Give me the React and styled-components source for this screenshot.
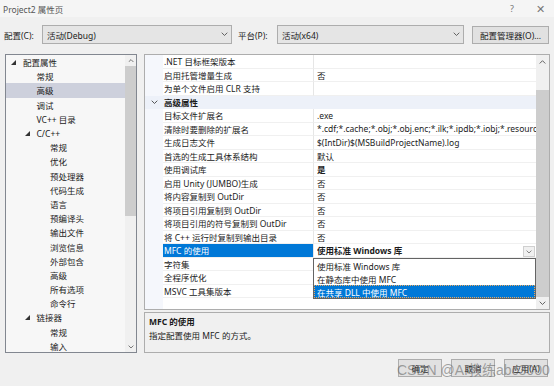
import React from 'react';
import styled, { createGlobalStyle } from 'styled-components';

const Global = createGlobalStyle`
  html, body { margin: 0; padding: 0; background: #f0f0f0; }
  body { font-family: "Noto Sans", "Noto Sans CJK SC", sans-serif; }
`;

const Dialog = styled.div`
  position: relative;
  width: 554px;
  height: 386px;
  overflow: hidden;
  background: #f0f0f0;
  font-family: "Noto Sans", "Noto Sans CJK SC", sans-serif;
  font-size: 8.5px;
  color: #1b1b1b;
  display: flex;
  flex-direction: column;
`;

const TitleBar = styled.div`
  height: 17px;
  display: flex;
  align-items: center;
  padding-left: 3px;
  background: #f5f5f5;
  color: #555;
`;

const TitleText = styled.div`
  flex: 1;
`;

const TitleButton = styled.div`
  width: 28px;
  text-align: center;
  color: #777;
  font-size: ${(p) => p.$size || 9}px;
`;

const ConfigRow = styled.div`
  margin-top: 8px;
  height: 19px;
  display: flex;
  align-items: center;
  padding-left: 4px;
`;

const Label = styled.div`
  width: ${(p) => p.$w}px;
  flex: none;
`;

const Combo = styled.div`
  width: ${(p) => p.$w}px;
  height: 17px;
  flex: none;
  border: 1px solid #adadad;
  background: #e5e5e5;
  display: flex;
  align-items: center;
  padding-left: 4px;
  box-sizing: content-box;
  margin-right: ${(p) => p.$mr || 0}px;
`;

const ComboText = styled.div`
  flex: 1;
`;

const ComboArrow = styled.div`
  width: 14px;
  display: flex;
  align-items: center;
  justify-content: center;
`;

const PushButton = styled.div`
  width: ${(p) => p.$w}px;
  height: ${(p) => p.$h}px;
  flex: none;
  border: 1px solid #adadad;
  background: #e1e1e1;
  display: flex;
  align-items: center;
  justify-content: center;
  box-sizing: border-box;
`;

const Main = styled.div`
  margin-top: 10px;
  height: 299px;
  display: flex;
  padding-left: 5px;
  gap: 7px;
`;

const TreePanel = styled.div`
  width: 132px;
  box-sizing: border-box;
  border: 1px solid #828790;
  background: #f7f7f7;
  display: flex;
`;

const TreeList = styled.div`
  flex: 1;
  overflow: hidden;
`;

const TreeRow = styled.div`
  height: 14.2px;
  display: flex;
  align-items: center;
  padding-left: ${(p) => 4 + p.$level * 13.5}px;
  background: ${(p) => (p.$selected ? '#cdd0dc' : 'transparent')};
  white-space: nowrap;
`;

const Twisty = styled.div`
  width: 13px;
  flex: none;
  display: flex;
  align-items: center;
  padding-left: 1px;
  box-sizing: border-box;
`;

const ScrollBar = styled.div`
  width: ${(p) => p.$w}px;
  flex: none;
  background: #f0f0f0;
  display: flex;
  flex-direction: column;
`;

const ScrollArrow = styled.div`
  height: ${(p) => p.$h}px;
  flex: none;
  display: flex;
  align-items: center;
  justify-content: center;
`;

const ScrollTrack = styled.div`
  flex: 1;
  display: flex;
  flex-direction: column;
  align-items: center;
`;

const ScrollThumb = styled.div`
  width: ${(p) => p.$w}px;
  margin-top: ${(p) => p.$top}px;
  height: ${(p) => p.$h}px;
  background: #cdcdcd;
`;

const RightCol = styled.div`
  width: 406px;
  display: flex;
  flex-direction: column;
  gap: 2px;
`;

const Grid = styled.div`
  height: 256px;
  box-sizing: border-box;
  border: 1px solid #adadad;
  background: #fff;
  display: flex;
`;

const GridBody = styled.div`
  position: relative;
  flex: 1;
  overflow: hidden;
  background: linear-gradient(to right, #f5f7fc 0, #f5f7fc 18px, #fff 18px);
`;

const GridRow = styled.div`
  height: 13.5px;
  display: grid;
  grid-template-columns: 18px 150px 1fr;
  background: ${(p) => (p.$category ? '#edf1f9' : 'transparent')};
`;

const Gutter = styled.div`
  display: flex;
  align-items: center;
  justify-content: center;
`;

const NameCell = styled.div`
  display: flex;
  align-items: center;
  padding-left: 1px;
  white-space: nowrap;
  overflow: hidden;
  box-sizing: border-box;
  font-weight: ${(p) => (p.$bold ? 700 : 400)};
  background: ${(p) => (p.$active ? '#0078d7' : 'transparent')};
  color: ${(p) => (p.$active ? '#fff' : 'inherit')};
  border-bottom: 1px solid ${(p) => (p.$category ? 'transparent' : '#f0f0f0')};
`;

const ValueCell = styled.div`
  display: flex;
  align-items: center;
  padding-left: 3px;
  white-space: nowrap;
  overflow: hidden;
  box-sizing: border-box;
  font-weight: ${(p) => (p.$bold ? 700 : 400)};
  border-left: 1px solid ${(p) => (p.$category ? 'transparent' : '#e6e6e6')};
  border-bottom: 1px solid ${(p) => (p.$category ? 'transparent' : '#f0f0f0')};
`;

const ValueText = styled.div`
  flex: 1;
  overflow: hidden;
`;

const DropButton = styled.div`
  width: 12px;
  height: 11px;
  flex: none;
  margin-right: 1px;
  border: 1px solid #cfcfcf;
  background: #f0f0f0;
  display: flex;
  align-items: center;
  justify-content: center;
  box-sizing: border-box;
  align-self: flex-start;
  margin-top: 2px;
`;

const DropList = styled.div`
  position: absolute;
  left: 168px;
  top: 203px;
  width: 223px;
  height: 41px;
  box-sizing: border-box;
  border: 1px solid #646464;
  background: #fff;
  display: flex;
  flex-direction: column;
`;

const DropItem = styled.div`
  height: 13px;
  display: flex;
  align-items: center;
  padding-left: 2px;
  box-sizing: border-box;
  background: ${(p) => (p.$sel ? '#0078d7' : 'transparent')};
  color: ${(p) => (p.$sel ? '#fff' : 'inherit')};
  border: 1px dotted ${(p) => (p.$sel ? '#e8a860' : 'transparent')};
`;

const Desc = styled.div`
  flex: 1;
  box-sizing: border-box;
  border: 1px solid #adadad;
  background: #f0f0f0;
  padding: 1px 4px;
`;

const DescLine = styled.div`
  height: 14px;
  display: flex;
  align-items: center;
  font-weight: ${(p) => (p.$bold ? 700 : 400)};
`;

const ButtonRow = styled.div`
  margin-top: 6px;
  height: 18px;
  display: flex;
  justify-content: flex-end;
  gap: 9px;
  padding-right: 6px;
`;

const Watermark = styled.div`
  position: absolute;
  left: 397px;
  top: 362px;
  font-family: "Liberation Sans", Arial, "Noto Sans CJK SC", sans-serif;
  font-size: 14px;
  line-height: 16px;
  color: rgba(105, 105, 105, 0.6);
  white-space: nowrap;
  pointer-events: none;
`;

const Chevron = ({ up, color = '#555', w = 7 }) => (
  <svg width={w} height={w * 0.6} viewBox="0 0 10 6">
    <polyline
      points={up ? '1,5 5,1 9,5' : '1,1 5,5 9,1'}
      fill="none"
      stroke={color}
      strokeWidth="1.3"
    />
  </svg>
);

const Triangle = () => (
  <svg width="5" height="5" viewBox="0 0 5 5">
    <polygon points="5,0 5,5 0,5" fill="#333" />
  </svg>
);

const treeItems = [
  { t: '配置属性', l: 0, exp: true },
  { t: '常规', l: 1 },
  { t: '高级', l: 1, sel: true },
  { t: '调试', l: 1 },
  { t: 'VC++ 目录', l: 1 },
  { t: 'C/C++', l: 1, exp: true },
  { t: '常规', l: 2 },
  { t: '优化', l: 2 },
  { t: '预处理器', l: 2 },
  { t: '代码生成', l: 2 },
  { t: '语言', l: 2 },
  { t: '预编译头', l: 2 },
  { t: '输出文件', l: 2 },
  { t: '浏览信息', l: 2 },
  { t: '外部包含', l: 2 },
  { t: '高级', l: 2 },
  { t: '所有选项', l: 2 },
  { t: '命令行', l: 2 },
  { t: '链接器', l: 1, exp: true },
  { t: '常规', l: 2 },
  { t: '输入', l: 2 },
];

const props = [
  { n: '.NET 目标框架版本', v: '' },
  { n: '启用托管增量生成', v: '否' },
  { n: '为单个文件启用 CLR 支持', v: '' },
  { n: '高级属性', cat: true },
  { n: '目标文件扩展名', v: '.exe' },
  { n: '清除时要删除的扩展名', v: '*.cdf;*.cache;*.obj;*.obj.enc;*.ilk;*.ipdb;*.iobj;*.resources;*.tlb;*.tli;*.tlh' },
  { n: '生成日志文件', v: '$(IntDir)$(MSBuildProjectName).log' },
  { n: '首选的生成工具体系结构', v: '默认' },
  { n: '使用调试库', v: '是', b: true },
  { n: '启用 Unity (JUMBO)生成', v: '否' },
  { n: '将内容复制到 OutDir', v: '否' },
  { n: '将项目引用复制到 OutDir', v: '否' },
  { n: '将项目引用的符号复制到 OutDir', v: '否' },
  { n: '将 C++ 运行时复制到输出目录', v: '否' },
  { n: 'MFC 的使用', v: '使用标准 Windows 库', b: true, active: true },
  { n: '字符集', v: '' },
  { n: '全程序优化', v: '' },
  { n: 'MSVC 工具集版本', v: '' },
];

export default function App() {
  return (
    <Dialog>
      <Global />
      <TitleBar>
        <TitleText>Project2 属性页</TitleText>
        <TitleButton>?</TitleButton>
        <TitleButton $size={11}>✕</TitleButton>
      </TitleBar>

      <ConfigRow>
        <Label $w={38}>配置(C):</Label>
        <Combo $w={184} $mr={6}>
          <ComboText>活动(Debug)</ComboText>
          <ComboArrow><Chevron /></ComboArrow>
        </Combo>
        <Label $w={39}>平台(P):</Label>
        <Combo $w={181} $mr={8}>
          <ComboText>活动(x64)</ComboText>
          <ComboArrow><Chevron /></ComboArrow>
        </Combo>
        <PushButton $w={77} $h={18}>配置管理器(O)...</PushButton>
      </ConfigRow>

      <Main>
        <TreePanel>
          <TreeList>
            {treeItems.map((it, i) => (
              <TreeRow key={i} $level={it.l} $selected={it.sel}>
                <Twisty>{it.exp ? <Triangle /> : null}</Twisty>
                {it.t}
              </TreeRow>
            ))}
          </TreeList>
          <ScrollBar $w={11}>
            <ScrollArrow $h={11}><Chevron up w={6} /></ScrollArrow>
            <ScrollTrack>
              <ScrollThumb $w={11} $top={0} $h={150} />
            </ScrollTrack>
            <ScrollArrow $h={11}><Chevron w={6} /></ScrollArrow>
          </ScrollBar>
        </TreePanel>

        <RightCol>
          <Grid>
            <GridBody>
              {props.map((p, i) =>
                p.cat ? (
                  <GridRow key={i} $category>
                    <Gutter><Chevron w={7} color="#444" /></Gutter>
                    <NameCell $bold $category>{p.n}</NameCell>
                    <ValueCell $category />
                  </GridRow>
                ) : (
                  <GridRow key={i}>
                    <Gutter />
                    <NameCell $active={p.active}>{p.n}</NameCell>
                    <ValueCell $bold={p.b}>
                      <ValueText>{p.v}</ValueText>
                      {p.active ? (
                        <DropButton><Chevron w={6} color="#666" /></DropButton>
                      ) : null}
                    </ValueCell>
                  </GridRow>
                )
              )}
              <DropList>
                <DropItem>使用标准 Windows 库</DropItem>
                <DropItem>在静态库中使用 MFC</DropItem>
                <DropItem $sel>在共享 DLL 中使用 MFC</DropItem>
              </DropList>
            </GridBody>
            <ScrollBar $w={13}>
              <ScrollArrow $h={14}><Chevron up w={7} /></ScrollArrow>
              <ScrollTrack>
                <ScrollThumb $w={13} $top={21} $h={207} />
              </ScrollTrack>
              <ScrollArrow $h={12}><Chevron w={7} /></ScrollArrow>
            </ScrollBar>
          </Grid>
          <Desc>
            <DescLine $bold>MFC 的使用</DescLine>
            <DescLine>指定配置使用 MFC 的方式。</DescLine>
          </Desc>
        </RightCol>
      </Main>

      <ButtonRow>
        <PushButton $w={44} $h={18}>确定</PushButton>
        <PushButton $w={44} $h={18}>取消</PushButton>
        <PushButton $w={44} $h={18}>应用(A)</PushButton>
      </ButtonRow>
      <Watermark>CSDN @AI教练abc3000</Watermark>
    </Dialog>
  );
}
